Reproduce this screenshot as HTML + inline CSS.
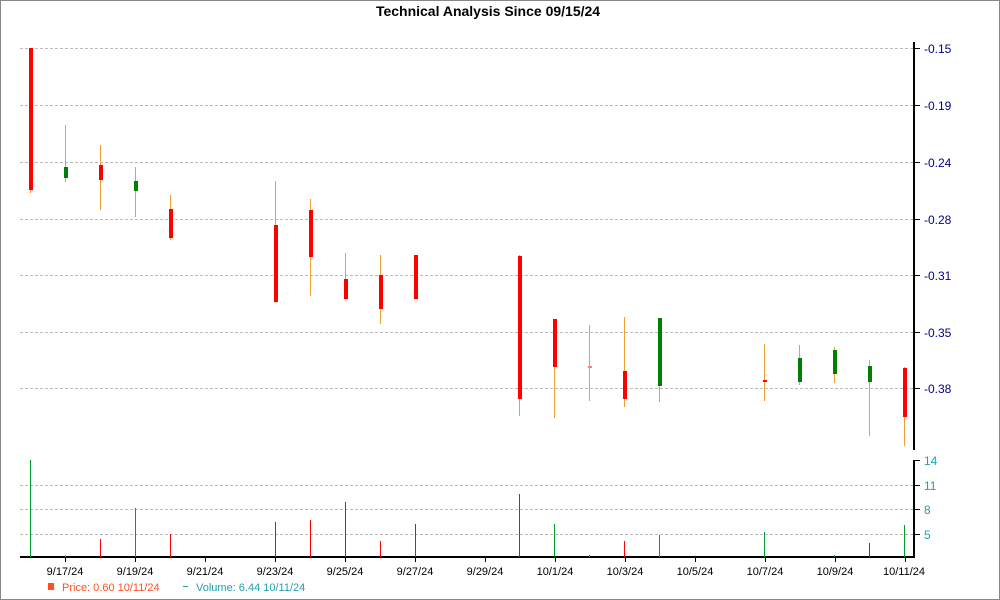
<!DOCTYPE html>
<html><head><meta charset="utf-8"><style>
html,body{margin:0;padding:0;background:#fff;}
svg{display:block;font-family:"Liberation Sans",sans-serif;}
</style></head><body>
<svg width="1000" height="600" xmlns="http://www.w3.org/2000/svg">
<rect x="0.5" y="0.5" width="999" height="599" fill="#fff" stroke="#888"/>
<text x="488" y="16" text-anchor="middle" font-size="14" font-weight="bold" fill="#000">Technical Analysis Since 09/15/24</text>
<g stroke="#bbb" stroke-dasharray="3,2" stroke-width="1">
<line x1="20" y1="48.5" x2="913" y2="48.5"/>
<line x1="20" y1="105.5" x2="913" y2="105.5"/>
<line x1="20" y1="162.5" x2="913" y2="162.5"/>
<line x1="20" y1="219.5" x2="913" y2="219.5"/>
<line x1="20" y1="275.5" x2="913" y2="275.5"/>
<line x1="20" y1="332.5" x2="913" y2="332.5"/>
<line x1="20" y1="388.5" x2="913" y2="388.5"/>
<line x1="20" y1="485.5" x2="913" y2="485.5"/>
<line x1="20" y1="509.5" x2="913" y2="509.5"/>
<line x1="20" y1="534.5" x2="913" y2="534.5"/>
</g>
<g stroke="#000" stroke-width="2" fill="none">
<line x1="914" y1="42" x2="914" y2="450"/>
<line x1="914" y1="460" x2="914" y2="558"/>
<line x1="20" y1="557" x2="915" y2="557"/>
</g>
<g stroke="#000" stroke-width="1">
<line x1="914" y1="48.5" x2="920" y2="48.5"/><line x1="914" y1="105.5" x2="920" y2="105.5"/>
<line x1="914" y1="162.5" x2="920" y2="162.5"/><line x1="914" y1="219.5" x2="920" y2="219.5"/>
<line x1="914" y1="275.5" x2="920" y2="275.5"/><line x1="914" y1="332.5" x2="920" y2="332.5"/>
<line x1="914" y1="388.5" x2="920" y2="388.5"/>
<line x1="914" y1="460.5" x2="920" y2="460.5"/><line x1="914" y1="485.5" x2="920" y2="485.5"/>
<line x1="914" y1="509.5" x2="920" y2="509.5"/><line x1="914" y1="534.5" x2="920" y2="534.5"/>
</g>
<g font-size="12" fill="#00008b">
<text x="924" y="53">-0.15</text><text x="924" y="110">-0.19</text><text x="924" y="167">-0.24</text>
<text x="924" y="224">-0.28</text><text x="924" y="280">-0.31</text><text x="924" y="337">-0.35</text>
<text x="924" y="393">-0.38</text>
</g>
<g font-size="12" fill="#20a0b0">
<text x="924" y="465">14</text><text x="924" y="490">11</text><text x="924" y="514">8</text><text x="924" y="539">5</text>
</g>
<g font-size="11" fill="#000" text-anchor="middle">
<text x="65" y="575">9/17/24</text><text x="135" y="575">9/19/24</text><text x="205" y="575">9/21/24</text>
<text x="275" y="575">9/23/24</text><text x="345" y="575">9/25/24</text><text x="415" y="575">9/27/24</text>
<text x="485" y="575">9/29/24</text><text x="555" y="575">10/1/24</text><text x="625" y="575">10/3/24</text>
<text x="695" y="575">10/5/24</text><text x="765" y="575">10/7/24</text><text x="835" y="575">10/9/24</text>
<text x="904" y="575">10/11/24</text>
</g>
<g stroke="#000" stroke-width="1">
<line x1="65.5" y1="557" x2="65.5" y2="562"/><line x1="135.5" y1="557" x2="135.5" y2="562"/><line x1="205.5" y1="557" x2="205.5" y2="562"/>
<line x1="275.5" y1="557" x2="275.5" y2="562"/><line x1="345.5" y1="557" x2="345.5" y2="562"/><line x1="415.5" y1="557" x2="415.5" y2="562"/>
<line x1="485.5" y1="557" x2="485.5" y2="562"/><line x1="555.5" y1="557" x2="555.5" y2="562"/><line x1="625.5" y1="557" x2="625.5" y2="562"/>
<line x1="695.5" y1="557" x2="695.5" y2="562"/><line x1="765.5" y1="557" x2="765.5" y2="562"/><line x1="835.5" y1="557" x2="835.5" y2="562"/>
<line x1="905.5" y1="557" x2="905.5" y2="562"/>
</g>
<!-- wicks -->
<g stroke="#f0a030" stroke-width="1">
<line x1="30.5" y1="48" x2="30.5" y2="193"/><line x1="65.5" y1="125" x2="65.5" y2="182"/>
<line x1="100.5" y1="145" x2="100.5" y2="210"/><line x1="135.5" y1="167" x2="135.5" y2="217"/>
<line x1="170.5" y1="195" x2="170.5" y2="240"/><line x1="275.5" y1="181" x2="275.5" y2="303"/>
<line x1="310.5" y1="199" x2="310.5" y2="296"/><line x1="345.5" y1="253" x2="345.5" y2="300"/>
<line x1="380.5" y1="255" x2="380.5" y2="324"/><line x1="415.5" y1="255" x2="415.5" y2="299"/>
<line x1="519.5" y1="255" x2="519.5" y2="416"/><line x1="554.5" y1="319" x2="554.5" y2="418"/>
<line x1="589.5" y1="325" x2="589.5" y2="401"/><line x1="624.5" y1="317" x2="624.5" y2="407"/>
<line x1="659.5" y1="318" x2="659.5" y2="402"/><line x1="764.5" y1="344" x2="764.5" y2="401"/>
<line x1="799.5" y1="345" x2="799.5" y2="385"/><line x1="834.5" y1="347" x2="834.5" y2="383"/>
<line x1="869.5" y1="360" x2="869.5" y2="436"/><line x1="904.5" y1="367" x2="904.5" y2="446"/>
</g>
<g fill="#ff0000">
<rect x="29" y="48" width="4" height="142"/><rect x="99" y="165" width="4" height="15"/>
<rect x="169" y="209" width="4" height="29"/><rect x="274" y="225" width="4" height="77"/>
<rect x="309" y="210" width="4" height="47"/><rect x="344" y="279" width="4" height="20"/>
<rect x="379" y="275" width="4" height="34"/><rect x="414" y="255" width="4" height="44"/>
<rect x="518" y="256" width="4" height="143"/><rect x="553" y="319" width="4" height="48"/>
<rect x="588" y="366" width="4" height="2" fill="#ff8080"/><rect x="623" y="371" width="4" height="28"/>
<rect x="763" y="380" width="4" height="2"/><rect x="903" y="368" width="4" height="49"/>
</g>
<g fill="#008000">
<rect x="64" y="167" width="4" height="11"/><rect x="134" y="181" width="4" height="10"/>
<rect x="658" y="318" width="4" height="68"/><rect x="798" y="358" width="4" height="24"/>
<rect x="833" y="350" width="4" height="24"/><rect x="868" y="366" width="4" height="16"/>
</g>
<!-- volume -->
<g stroke-width="1">
<line x1="30.5" y1="460" x2="30.5" y2="557" stroke="#00a030"/>
<line x1="65.5" y1="555" x2="65.5" y2="557" stroke="#20a0b0"/>
<line x1="100.5" y1="539" x2="100.5" y2="557" stroke="#ff0000"/>
<line x1="135.5" y1="508" x2="135.5" y2="557" stroke="#00a030"/>
<line x1="170.5" y1="534" x2="170.5" y2="557" stroke="#ff0000"/>
<line x1="275.5" y1="522" x2="275.5" y2="557" stroke="#ff0000"/>
<line x1="310.5" y1="520" x2="310.5" y2="557" stroke="#ff0000"/>
<line x1="345.5" y1="502" x2="345.5" y2="557" stroke="#ff0000"/>
<line x1="380.5" y1="541" x2="380.5" y2="557" stroke="#ff0000"/>
<line x1="415.5" y1="524" x2="415.5" y2="557" stroke="#ff0000"/>
<line x1="519.5" y1="494" x2="519.5" y2="557" stroke="#ff0000"/>
<line x1="554.5" y1="524" x2="554.5" y2="557" stroke="#00a030"/>
<line x1="589.5" y1="555" x2="589.5" y2="557" stroke="#ff0000"/>
<line x1="624.5" y1="541" x2="624.5" y2="557" stroke="#ff0000"/>
<line x1="659.5" y1="535" x2="659.5" y2="557" stroke="#00a030"/>
<line x1="764.5" y1="532" x2="764.5" y2="557" stroke="#00a030"/>
<line x1="834.5" y1="555" x2="834.5" y2="557" stroke="#00a030"/>
<line x1="869.5" y1="543" x2="869.5" y2="557" stroke="#ff0000"/>
<line x1="904.5" y1="525" x2="904.5" y2="557" stroke="#00a030"/>
</g>
<rect x="48" y="583" width="6" height="7" fill="#ff5020"/>
<text x="62" y="591" font-size="11" fill="#ff5020">Price: 0.60  10/11/24</text>
<line x1="183" y1="586.5" x2="188" y2="586.5" stroke="#20a0b0"/>
<text x="196" y="591" font-size="11" fill="#20a0b0">Volume: 6.44  10/11/24</text>
</svg>
</body></html>
